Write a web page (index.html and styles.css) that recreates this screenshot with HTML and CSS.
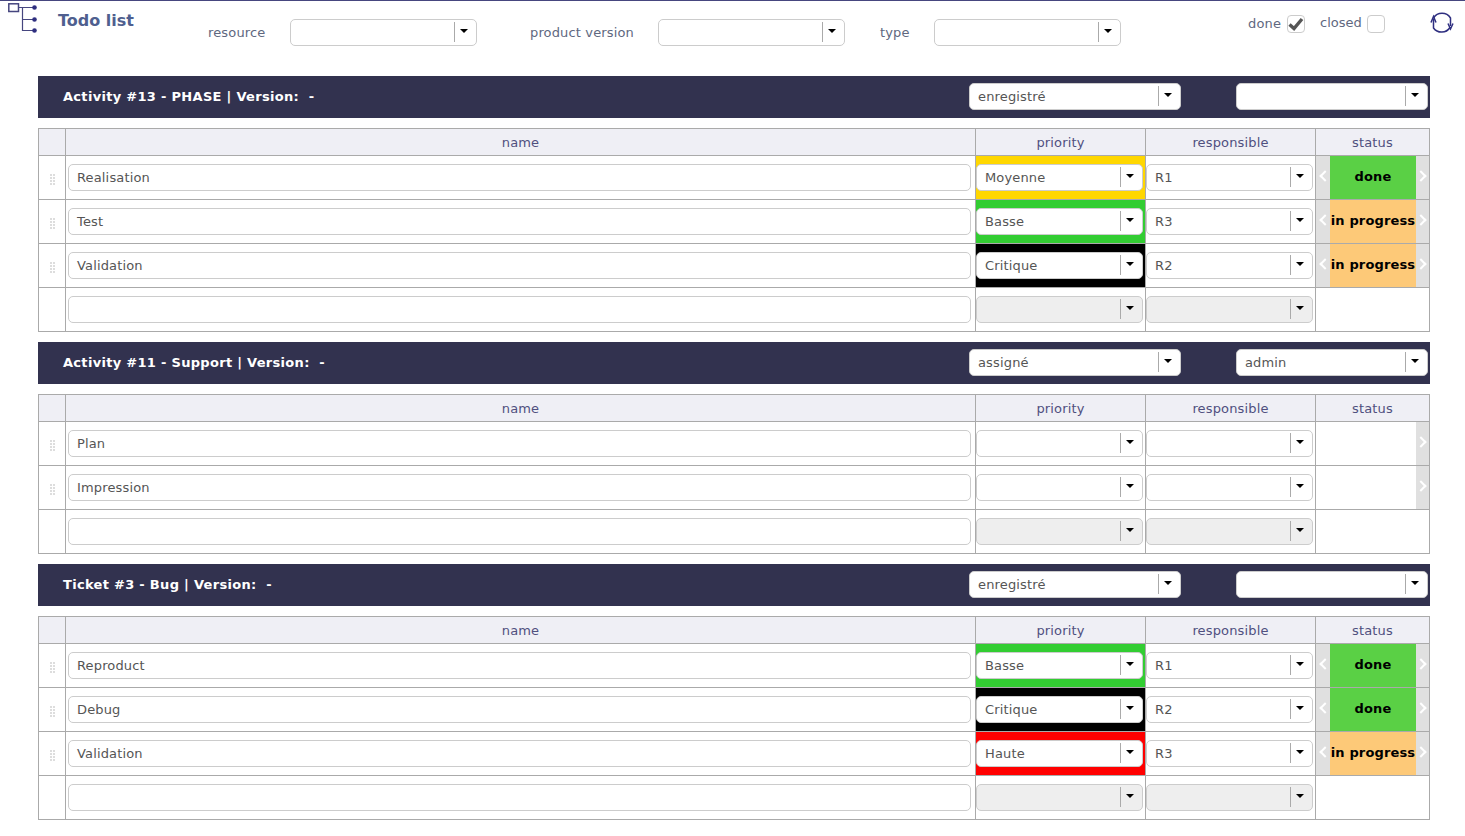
FILE: index.html
```html
<!DOCTYPE html>
<html lang="en">
<head>
    <meta charset="UTF-8">
    <title>Todo list</title>
    <link rel="stylesheet" href="styles.css">
</head>
<body>
    <div class="toolbar">
        <svg class="list-icon" width="30" height="34" viewBox="0 0 30 34">
            <rect x="0.800" y="2.800" width="9.700" height="7.700" fill="#fff" stroke="#46467f" stroke-width="1.500"/>
            <path d="M10 6.500H26M14.500 6.500V29.500H26M14.500 18.500H26" fill="none" stroke="#46467f" stroke-width="1.200"/>
            <circle cx="26.500" cy="6.500" r="2.300" fill="#2f2f80"/>
            <circle cx="26.500" cy="18.500" r="2.300" fill="#2f2f80"/>
            <circle cx="26.500" cy="29.500" r="2.300" fill="#2f2f80"/>
        </svg>
        <h1 class="title">Todo list</h1>
        <div class="filter filter-resource">
            <label>resource</label>
            <div class="combo"><span class="val"></span><span class="arrow"></span></div>
        </div>
        <div class="filter filter-version">
            <label>product version</label>
            <div class="combo"><span class="val"></span><span class="arrow"></span></div>
        </div>
        <div class="filter filter-type">
            <label>type</label>
            <div class="combo"><span class="val"></span><span class="arrow"></span></div>
        </div>
        <div class="check check-done">
            <label>done</label>
            <span class="box">
                <svg width="16" height="16" viewBox="0 0 16 16"><path d="M1.500 8.500L6 12.500 14 3" fill="none" stroke="#555" stroke-width="3.400"/></svg>
            </span>
        </div>
        <div class="check check-closed">
            <label>closed</label>
            <span class="box"></span>
        </div>
        <svg class="refresh" width="24" height="24" viewBox="0 0 24 24" fill="none" stroke="#2f2f80" stroke-width="1.500">
            <path d="M3.500 7A10 10 0 0 1 20.500 7V15"/>
            <path d="M20 16.500A10 10 0 0 1 3.500 17V8"/>
            <path d="M1 11.500L3.500 5.500 6 11.500M18 12.500L20.500 18 23 12.500"/>
        </svg>
    </div>

    <div class="section">
        <div class="band">
            <span class="band-title">Activity #13 - PHASE | Version:&nbsp; -</span>
            <div class="combo combo-state"><span class="val">enregistré</span><span class="arrow"></span></div>
            <div class="combo combo-owner"><span class="val"></span><span class="arrow"></span></div>
        </div>
        <table class="todo">
            <tr><th class="c-grip"></th><th class="c-name">name</th><th class="c-prio">priority</th><th class="c-resp">responsible</th><th class="c-status">status</th></tr>
            <tr>
                <td class="grip"><span></span></td>
                <td><div class="input">Realisation</div></td>
                <td class="prio-moyenne"><div class="combo"><span class="val">Moyenne</span><span class="arrow"></span></div></td>
                <td><div class="combo"><span class="val">R1</span><span class="arrow"></span></div></td>
                <td class="status"><div class="status-wrap"><span class="prev"></span><span class="state done">done</span><span class="next"></span></div></td>
            </tr>
            <tr>
                <td class="grip"><span></span></td>
                <td><div class="input">Test</div></td>
                <td class="prio-basse"><div class="combo"><span class="val">Basse</span><span class="arrow"></span></div></td>
                <td><div class="combo"><span class="val">R3</span><span class="arrow"></span></div></td>
                <td class="status"><div class="status-wrap"><span class="prev"></span><span class="state progress">in progress</span><span class="next"></span></div></td>
            </tr>
            <tr>
                <td class="grip"><span></span></td>
                <td><div class="input">Validation</div></td>
                <td class="prio-critique"><div class="combo"><span class="val">Critique</span><span class="arrow"></span></div></td>
                <td><div class="combo"><span class="val">R2</span><span class="arrow"></span></div></td>
                <td class="status"><div class="status-wrap"><span class="prev"></span><span class="state progress">in progress</span><span class="next"></span></div></td>
            </tr>
            <tr>
                <td></td>
                <td><div class="input"></div></td>
                <td><div class="combo disabled"><span class="val"></span><span class="arrow"></span></div></td>
                <td><div class="combo disabled"><span class="val"></span><span class="arrow"></span></div></td>
                <td></td>
            </tr>
        </table>
    </div>

    <div class="section">
        <div class="band">
            <span class="band-title">Activity #11 - Support | Version:&nbsp; -</span>
            <div class="combo combo-state"><span class="val">assigné</span><span class="arrow"></span></div>
            <div class="combo combo-owner"><span class="val">admin</span><span class="arrow"></span></div>
        </div>
        <table class="todo">
            <tr><th class="c-grip"></th><th class="c-name">name</th><th class="c-prio">priority</th><th class="c-resp">responsible</th><th class="c-status">status</th></tr>
            <tr>
                <td class="grip"><span></span></td>
                <td><div class="input">Plan</div></td>
                <td><div class="combo"><span class="val"></span><span class="arrow"></span></div></td>
                <td><div class="combo"><span class="val"></span><span class="arrow"></span></div></td>
                <td class="status"><div class="status-wrap"><span class="state"></span><span class="next"></span></div></td>
            </tr>
            <tr>
                <td class="grip"><span></span></td>
                <td><div class="input">Impression</div></td>
                <td><div class="combo"><span class="val"></span><span class="arrow"></span></div></td>
                <td><div class="combo"><span class="val"></span><span class="arrow"></span></div></td>
                <td class="status"><div class="status-wrap"><span class="state"></span><span class="next"></span></div></td>
            </tr>
            <tr>
                <td></td>
                <td><div class="input"></div></td>
                <td><div class="combo disabled"><span class="val"></span><span class="arrow"></span></div></td>
                <td><div class="combo disabled"><span class="val"></span><span class="arrow"></span></div></td>
                <td></td>
            </tr>
        </table>
    </div>

    <div class="section">
        <div class="band">
            <span class="band-title">Ticket #3 - Bug | Version:&nbsp; -</span>
            <div class="combo combo-state"><span class="val">enregistré</span><span class="arrow"></span></div>
            <div class="combo combo-owner"><span class="val"></span><span class="arrow"></span></div>
        </div>
        <table class="todo">
            <tr><th class="c-grip"></th><th class="c-name">name</th><th class="c-prio">priority</th><th class="c-resp">responsible</th><th class="c-status">status</th></tr>
            <tr>
                <td class="grip"><span></span></td>
                <td><div class="input">Reproduct</div></td>
                <td class="prio-basse"><div class="combo"><span class="val">Basse</span><span class="arrow"></span></div></td>
                <td><div class="combo"><span class="val">R1</span><span class="arrow"></span></div></td>
                <td class="status"><div class="status-wrap"><span class="prev"></span><span class="state done">done</span><span class="next"></span></div></td>
            </tr>
            <tr>
                <td class="grip"><span></span></td>
                <td><div class="input">Debug</div></td>
                <td class="prio-critique"><div class="combo"><span class="val">Critique</span><span class="arrow"></span></div></td>
                <td><div class="combo"><span class="val">R2</span><span class="arrow"></span></div></td>
                <td class="status"><div class="status-wrap"><span class="prev"></span><span class="state done">done</span><span class="next"></span></div></td>
            </tr>
            <tr>
                <td class="grip"><span></span></td>
                <td><div class="input">Validation</div></td>
                <td class="prio-haute"><div class="combo"><span class="val">Haute</span><span class="arrow"></span></div></td>
                <td><div class="combo"><span class="val">R3</span><span class="arrow"></span></div></td>
                <td class="status"><div class="status-wrap"><span class="prev"></span><span class="state progress">in progress</span><span class="next"></span></div></td>
            </tr>
            <tr>
                <td></td>
                <td><div class="input"></div></td>
                <td><div class="combo disabled"><span class="val"></span><span class="arrow"></span></div></td>
                <td><div class="combo disabled"><span class="val"></span><span class="arrow"></span></div></td>
                <td></td>
            </tr>
        </table>
    </div>
</body>
</html>
```

FILE: styles.css
```css
* {
    margin: 0;
    padding: 0;
    box-sizing: border-box;
}

body {
    font-family: 'DejaVu Sans', Verdana, sans-serif;
    font-size: 13px;
    letter-spacing: 0.15px;
    color: #555;
    background: #fff;
    border-top: 1px solid #46467f;
    overflow: hidden;
}

/* top bar */
.toolbar {
    display: flex;
    align-items: flex-start;
    height: 75px;
    padding-left: 8px;
}

.list-icon {
    flex: none;
}

.title {
    font-size: 16px;
    line-height: 20px;
    font-weight: bold;
    letter-spacing: 0;
    color: #4f5f8f;
    margin: 10px 0 0 20px;
    width: 150px;
}

.filter {
    display: flex;
    align-items: center;
    margin-top: 18px;
}

.filter label {
    color: #60687f;
    white-space: nowrap;
}

.filter .combo {
    width: 187px;
}

.filter-resource label { width: 82px; }
.filter-version { margin-left: 53px; }
.filter-version label { width: 128px; }
.filter-type { margin-left: 35px; }
.filter-type label { width: 54px; }

.check {
    display: flex;
    align-items: center;
    margin-top: 14px;
}

.check label {
    color: #60687f;
    margin-top: -1px;
}

.check-done { margin-left: 127px; }
.check-done label { width: 39px; }
.check-closed { margin-left: 15px; }
.check-closed label { width: 47px; margin-top: -3px; letter-spacing: 0; }

.box {
    display: flex;
    align-items: center;
    justify-content: center;
    width: 18px;
    height: 18px;
    border: 1px solid #ccc;
    border-radius: 4px;
}

.refresh {
    flex: none;
    margin: 10px 0 0 45px;
}

/* sections */
.section {
    width: 1392px;
    margin: 0 0 10px 38px;
}

.band {
    display: flex;
    align-items: flex-start;
    height: 42px;
    padding: 7px 0 0 25px;
    margin-bottom: 10px;
    background: #32324f;
}

.band-title {
    font-weight: bold;
    letter-spacing: 0.3px;
    line-height: 27px;
    color: #fff;
    width: 906px;
    white-space: pre;
}

.combo-state { width: 212px; }
.combo-owner { width: 192px; margin-left: 55px; }

/* combo box */
.combo {
    display: flex;
    height: 27px;
    background: #fff;
    border: 1px solid #ccc;
    border-radius: 5px;
}

.combo .val {
    flex: 1;
    line-height: 25px;
    padding-left: 8px;
    overflow: hidden;
}

.combo .arrow {
    position: relative;
    flex: none;
    width: 22px;
    height: 20px;
    margin-top: 2px;
    border-left: 1px solid #aaa;
}

.combo .arrow::after {
    content: '';
    position: absolute;
    left: 5px;
    top: 7px;
    border-left: 4px solid transparent;
    border-right: 4px solid transparent;
    border-top: 4px solid #000;
}

.combo.disabled {
    background: #eee;
}

/* table */
.todo {
    width: 1392px;
    table-layout: fixed;
    border-collapse: collapse;
}

.todo th,
.todo td {
    border: 1px solid #aaa;
}

.todo th {
    height: 27px;
    font-weight: normal;
    background: #efeff5;
    color: #50507f;
}

.todo td {
    height: 44px;
    padding: 0 2px 0 0;
}

.c-grip { width: 27px; }
.c-prio, .c-resp { width: 170px; }
.c-status { width: 114px; }

.todo td.grip {
    padding: 2px 0 0;
    text-align: center;
}

/* two columns of small squares */
.grip span {
    display: inline-block;
    width: 7px;
    height: 13px;
    vertical-align: middle;
    background-color: #ddd;
    background-image:
        linear-gradient(to right, #fff 1px, transparent 1px),
        linear-gradient(to bottom, #fff 1px, transparent 1px);
    background-size: 3px 3px;
}

.input {
    height: 27px;
    line-height: 25px;
    margin-left: 2px;
    margin-right: 2px;
    padding-left: 8px;
    border: 1px solid #ccc;
    border-radius: 5px;
}

.prio-moyenne { background: #ffd700; }
.prio-basse { background: #32cd32; }
.prio-critique { background: #000; }
.prio-haute { background: #f00; }

/* status */
.todo td.status {
    padding: 0;
}

.status-wrap {
    display: flex;
    height: 43px;
}

.prev, .next {
    display: flex;
    align-items: center;
    justify-content: center;
    flex: none;
    width: 14px;
    padding-bottom: 3px;
    background: #e0e0e0;
}

.next { width: 13px; }

.prev::before, .next::before {
    content: '';
    width: 6px;
    height: 6px;
    border-left: 2px solid #fff;
    border-top: 2px solid #fff;
}

.prev::before {
    margin-left: 3px;
    transform: rotate(-45deg);
}

.next::before {
    margin-right: 4px;
    transform: rotate(135deg);
}

.state {
    flex: 1;
    min-width: 0;
    font-weight: bold;
    line-height: 41px;
    text-align: center;
    color: #000;
    white-space: nowrap;
}

.state.done { background: #5ad045; }
.state.progress { background: #fdc978; }
```
